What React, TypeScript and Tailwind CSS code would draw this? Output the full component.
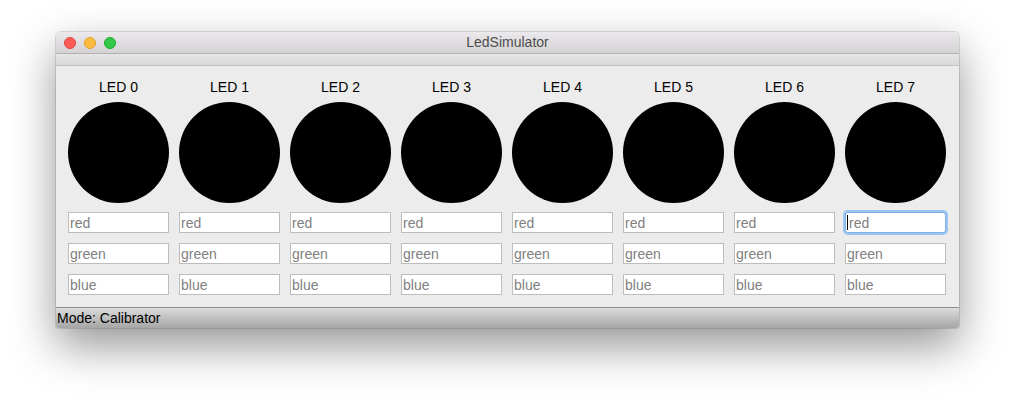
import React from 'react';

const leds = [0, 1, 2, 3, 4, 5, 6, 7];

function ChannelInput({ placeholder, focused }: { placeholder: string; focused?: boolean }) {
  return (
    <div
      className={
        focused
          ? 'h-[21px] w-full rounded-[3px] border border-[#7fb1e8] bg-white shadow-[0_0_0_2px_#9ac5f0] flex items-center'
          : 'h-[21px] w-full border border-[#bdbdbd] bg-white flex items-center'
      }
    >
      {focused && <span className="ml-[1px] h-[15px] w-px bg-black" />}
      <span className="pl-[1px] text-[14px] leading-none text-[#808080]">{placeholder}</span>
    </div>
  );
}

export default function App() {
  return (
    <div className="w-[1014px] h-[408px] bg-white pl-[56px] pt-[32px]" style={{ fontFamily: '"Liberation Sans", Arial, sans-serif' }}>
      <div className="w-[903px] flex flex-col rounded-t-[5px] rounded-b-[3px] overflow-hidden shadow-[0_18px_45px_rgba(0,0,0,0.42),0_0_0_1px_rgba(0,0,0,0.12)]">
        {/* Title bar */}
        <div className="relative h-[22px] bg-gradient-to-b from-[#ebe9eb] to-[#d4d2d4] border-b border-[#b3b1b3] flex items-center justify-center">
          <div className="absolute left-[8px] top-[5px] flex gap-[8px]">
            <span className="w-[12px] h-[12px] rounded-full bg-[#fc5b57] border border-[#e0443e]" />
            <span className="w-[12px] h-[12px] rounded-full bg-[#fdbb40] border border-[#dea123]" />
            <span className="w-[12px] h-[12px] rounded-full bg-[#34c84a] border border-[#1aab29]" />
          </div>
          <span className="text-[14px] text-[#4d4d4d]">LedSimulator</span>
        </div>

        {/* Toolbar strip */}
        <div className="h-[12px] bg-gradient-to-b from-[#e6e6e6] to-[#d9d9d9] border-b border-[#c2c2c2]" />

        {/* Content */}
        <div className="h-[241px] bg-[#ececec] pt-[13px] pl-[12px]">
          <div className="grid grid-cols-[repeat(8,101px)] gap-x-[10px]">
            {leds.map((i) => (
              <div key={i} className="flex flex-col items-center">
                <span className="text-[14px] leading-[16px] text-black">LED {i}</span>
                <div className="mt-[7px] w-[101px] h-[101px] rounded-full bg-black" />
                <div className="mt-[9px] w-full flex flex-col gap-[10px]">
                  <ChannelInput placeholder="red" focused={i === 7} />
                  <ChannelInput placeholder="green" />
                  <ChannelInput placeholder="blue" />
                </div>
              </div>
            ))}
          </div>
        </div>

        {/* Status bar */}
        <div className="h-[21px] border-t border-[#8e8e8e] bg-gradient-to-b from-[#dcdcdc] to-[#a6a6a6] flex items-center pl-[1px]">
          <span className="text-[14px] text-black">Mode: Calibrator</span>
        </div>
      </div>
    </div>
  );
}
